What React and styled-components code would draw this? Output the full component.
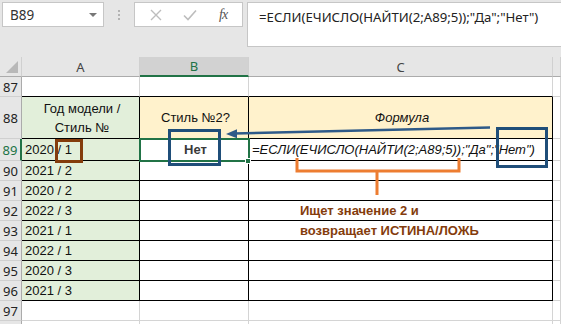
import React from 'react';
import styled, { createGlobalStyle } from 'styled-components';

const Global = createGlobalStyle`
  html, body { margin: 0; padding: 0; background: #fff; }
  * { box-sizing: border-box; }
`;

const Page = styled.div`
  position: relative;
  width: 561px;
  height: 324px;
  overflow: hidden;
  background: #fff;
  font-family: "Liberation Sans", Arial, sans-serif;
`;

const Toolbar = styled.div`
  height: 57px;
  background: #e6e6e6;
  display: flex;
  align-items: flex-start;
  padding: 2px 0 0 2px;
`;

const NameBox = styled.div`
  width: 102px;
  height: 25px;
  background: #fff;
  border: 1px solid #c6c6c6;
  display: flex;
  align-items: center;
  justify-content: space-between;
  padding: 0 6px 0 7px;
  font-family: "Noto Sans", sans-serif;
  font-size: 13.5px;
  color: #333;
`;

const Caret = styled.span`
  width: 0;
  height: 0;
  border-left: 4px solid transparent;
  border-right: 4px solid transparent;
  border-top: 4px solid #777;
`;

const Separator = styled.div`
  width: 30px;
  height: 25px;
  display: flex;
  flex-direction: column;
  align-items: center;
  justify-content: center;
  gap: 2px;

  span {
    width: 2px;
    height: 2px;
    background: #b3b3b3;
  }
`;

const FuncBox = styled.div`
  width: 109px;
  height: 25px;
  background: #fff;
  border: 1px solid #c6c6c6;
  display: flex;
  align-items: center;
  justify-content: space-around;
  padding: 0 4px;
`;

const Fx = styled.span`
  font-family: "Liberation Serif", serif;
  font-style: italic;
  font-size: 14px;
  color: #555;
  letter-spacing: -1px;
`;

const FormulaBox = styled.div`
  flex: 1;
  margin-left: 4px;
  height: 45px;
  background: #fff;
  border: 1px solid #c6c6c6;
  border-right: none;
  padding: 5px 0 0 11px;
  font-family: "Noto Sans", sans-serif;
  font-size: 13.2px;
  color: #222;
  white-space: nowrap;
`;

const Sheet = styled.div`
  display: grid;
  grid-template-columns: 22px 118px 109px 304px 1fr;
  grid-template-rows: 20px 20px 42px 22px repeat(9, 20px);
`;

const ColHead = styled.div`
  background: ${p => (p.$active ? '#d2d2d2' : '#e6e6e6')};
  border-right: 1px solid #d0d0d0;
  border-bottom: ${p => (p.$active ? '2px solid #217346' : '1px solid #ababab')};
  display: flex;
  align-items: center;
  justify-content: center;
  font-family: "Noto Sans", sans-serif;
  font-size: 13px;
  color: ${p => (p.$active ? '#217346' : '#444')};
  position: relative;
`;

const Corner = styled(ColHead)`
  &::after {
    content: '';
    position: absolute;
    right: 3px;
    bottom: 3px;
    width: 0;
    height: 0;
    border-left: 12px solid transparent;
    border-bottom: 12px solid #b8b8b8;
  }
`;

const RowHead = styled.div`
  background: #e6e6e6;
  border-right: ${p => (p.$active ? '2px solid #217346' : '1px solid #ababab')};
  border-bottom: 1px solid #d0d0d0;
  display: flex;
  align-items: center;
  justify-content: center;
  font-family: "Noto Sans", sans-serif;
  font-size: 13px;
  color: ${p => (p.$active ? '#217346' : '#222')};
`;

const Cell = styled.div`
  background: ${p => p.$bg || '#fff'};
  border-right: 1px solid ${p => (p.$edge ? '#000' : '#d4d4d4')};
  border-bottom: 1px solid ${p => (p.$edge || p.$top ? '#000' : '#d4d4d4')};
  display: flex;
  flex-direction: column;
  align-items: ${p => p.$align || 'flex-start'};
  justify-content: center;
  padding: 0 0 0 ${p => p.$indent || 3}px;
  font-size: 13px;
  line-height: 19px;
  color: ${p => p.$color || '#111'};
  font-weight: ${p => (p.$bold ? 700 : 400)};
  font-style: ${p => (p.$italic ? 'italic' : 'normal')};
  white-space: nowrap;
  text-align: center;
`;

const Box = styled.div`
  position: absolute;
  left: ${p => p.$x}px;
  top: ${p => p.$y}px;
  width: ${p => p.$w}px;
  height: ${p => p.$h}px;
  border: ${p => p.$stroke}px solid ${p => p.$color};
  pointer-events: none;
`;

const Handle = styled.div`
  position: absolute;
  left: 245px;
  top: 158px;
  width: 6px;
  height: 6px;
  background: #217346;
  border: 1px solid #fff;
`;

const Drawing = styled.svg`
  position: absolute;
  left: 0;
  top: 0;
  pointer-events: none;
`;

const GREEN = '#e2efda';
const CREAM = '#fff2cc';

const years = ['2020 / 1', '2021 / 2', '2020 / 2', '2022 / 3', '2021 / 1', '2022 / 1', '2020 / 3', '2021 / 3'];

const notes = {
  92: 'Ищет значение 2 и',
  93: 'возвращает ИСТИНА/ЛОЖЬ',
};

export default function App() {
  return (
    <Page>
      <Global />
      <Toolbar>
        <NameBox>
          B89
          <Caret />
        </NameBox>
        <Separator>
          <span /><span /><span />
        </Separator>
        <FuncBox>
          <svg width="12" height="12" viewBox="0 0 12 12">
            <path d="M1 1L11 11M11 1L1 11" stroke="#bdbdbd" strokeWidth="1.4" />
          </svg>
          <svg width="14" height="12" viewBox="0 0 14 12">
            <path d="M1 6.5L5 10.5L13 1.5" stroke="#bdbdbd" strokeWidth="1.6" fill="none" />
          </svg>
          <Fx>fx</Fx>
        </FuncBox>
        <FormulaBox>=ЕСЛИ(ЕЧИСЛО(НАЙТИ(2;A89;5));"Да";"Нет")</FormulaBox>
      </Toolbar>

      <Sheet>
        <Corner />
        <ColHead>A</ColHead>
        <ColHead $active>B</ColHead>
        <ColHead>C</ColHead>
        <ColHead />

        <RowHead>87</RowHead>
        <Cell $top />
        <Cell $top />
        <Cell $top />
        <Cell />

        <RowHead>88</RowHead>
        <Cell $bg={GREEN} $edge $align="center" $indent={0}>
          <span>Год модели /</span>
          <span>Стиль №</span>
        </Cell>
        <Cell $bg={CREAM} $edge $align="center" $indent={0}>Стиль №2?</Cell>
        <Cell $bg={CREAM} $edge $align="center" $indent={0} $italic>Формула</Cell>
        <Cell />

        {years.map((y, i) => {
          const n = 89 + i;
          return (
            <React.Fragment key={n}>
              <RowHead $active={n === 89}>{n}</RowHead>
              <Cell $bg={GREEN} $edge>{y}</Cell>
              <Cell $edge $align="center" $indent={0} $bold $color="#3a3a3a">
                {n === 89 ? 'Нет' : ''}
              </Cell>
              <Cell
                $edge
                $italic={n === 89}
                $bold={!!notes[n]}
                $color={notes[n] ? '#843c0c' : '#111'}
                $indent={notes[n] ? 51 : 3}
              >
                {n === 89 ? '=ЕСЛИ(ЕЧИСЛО(НАЙТИ(2;A89;5));"Да";"Нет")' : notes[n] || ''}
              </Cell>
              <Cell />
            </React.Fragment>
          );
        })}

        <RowHead>97</RowHead>
        <Cell />
        <Cell />
        <Cell />
        <Cell />

        <RowHead />
        <Cell />
        <Cell />
        <Cell />
        <Cell />
      </Sheet>

      <Box $x={139} $y={138} $w={111} $h={24} $stroke={2} $color="#217346" />
      <Handle />
      <Box $x={55} $y={139} $w={28} $h={24} $stroke={3} $color="#843c0c" />
      <Box $x={168} $y={129} $w={53} $h={37} $stroke={3} $color="#1f4e79" />
      <Box $x={496} $y={127} $w={52} $h={41} $stroke={3} $color="#1f4e79" />

      <Drawing width="561" height="324" viewBox="0 0 561 324">
        <line x1="490" y1="127.5" x2="234" y2="133.5" stroke="#2e5a88" strokeWidth="2.5" />
        <polygon points="226,134 237,129.3 237,138.3" fill="#2e5a88" />
        <path d="M297 158 V171 H459 V158 M377 171 V195" stroke="#ed7d31" strokeWidth="3" fill="none" />
      </Drawing>
    </Page>
  );
}
